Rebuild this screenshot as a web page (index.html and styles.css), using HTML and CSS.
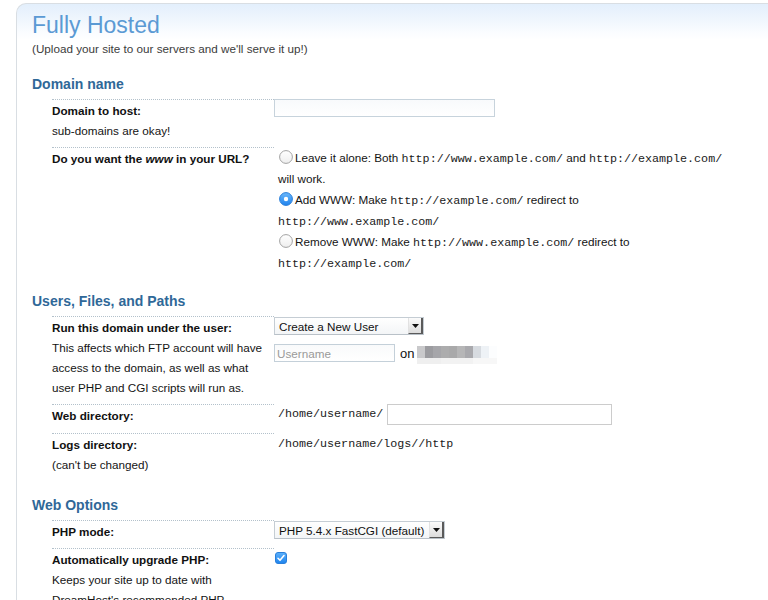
FILE: index.html
```html
<!DOCTYPE html>
<html lang="en">
<head>
<meta charset="utf-8">
<title>Fully Hosted</title>
<link rel="stylesheet" href="styles.css">
</head>
<body>
<div class="panel">
  <h1 class="title">Fully Hosted</h1>
  <p class="subtitle">(Upload your site to our servers and we'll serve it up!)</p>

  <h2 class="section section-first">Domain name</h2>
  <div class="row">
    <div class="label">
      <div class="label-title">Domain to host:</div>
      <div>sub-domains are okay!</div>
    </div>
    <div class="value">
      <input class="text text-domain" type="text">
    </div>
  </div>
  <div class="row">
    <div class="label">
      <div class="label-title">Do you want the <em>www</em> in your URL?</div>
    </div>
    <div class="value options">
      <div class="opt"><span class="radio"><svg width="14" height="14" viewBox="0 0 14 14"><defs><linearGradient id="ru" x1="0" y1="0" x2="0" y2="1"><stop offset="0" stop-color="#ffffff"/><stop offset="1" stop-color="#eeeeee"/></linearGradient></defs><circle cx="7" cy="7" r="6.4" fill="url(#ru)" stroke="#a2a2a2" stroke-width="1"/></svg></span>Leave it alone: Both <code>http://www.example.com/</code> and <code>http://example.com/</code> will work.</div>
      <div class="opt"><span class="radio"><svg width="14" height="14" viewBox="0 0 14 14"><defs><linearGradient id="rc" x1="0" y1="0" x2="0" y2="1"><stop offset="0" stop-color="#6cb8fb"/><stop offset="1" stop-color="#1f83ee"/></linearGradient></defs><circle cx="7" cy="7" r="6.4" fill="url(#rc)" stroke="#2b7fd9" stroke-width="1"/><circle cx="7" cy="7" r="2.2" fill="#ffffff"/></svg></span>Add WWW: Make <code>http://example.com/</code> redirect to <code>http://www.example.com/</code></div>
      <div class="opt"><span class="radio"><svg width="14" height="14" viewBox="0 0 14 14"><circle cx="7" cy="7" r="6.4" fill="url(#ru)" stroke="#a2a2a2" stroke-width="1"/></svg></span>Remove WWW: Make <code>http://www.example.com/</code> redirect to <code>http://example.com/</code></div>
    </div>
  </div>

  <h2 class="section">Users, Files, and Paths</h2>
  <div class="row">
    <div class="label">
      <div class="label-title">Run this domain under the user:</div>
      <div>This affects which FTP account will have access to the domain, as well as what user PHP and CGI scripts will run as.</div>
    </div>
    <div class="value stack">
      <div class="select select-user"><span class="select-text">Create a New User</span><span class="select-btn"><svg width="7" height="4" viewBox="0 0 7 4"><path d="M0 0H7L3.5 4Z" fill="#111"/></svg></span></div>
      <div class="user-line">
        <input class="text text-user" type="text" placeholder="Username">
        <span class="on">on</span>
        <span class="blur"></span>
      </div>
    </div>
  </div>
  <div class="row">
    <div class="label">
      <div class="label-title">Web directory:</div>
    </div>
    <div class="value dir-line">
      <code>/home/username/</code>
      <input class="text text-dir" type="text">
    </div>
  </div>
  <div class="row">
    <div class="label">
      <div class="label-title">Logs directory:</div>
      <div>(can't be changed)</div>
    </div>
    <div class="value plain">
      <code>/home/username/logs//http</code>
    </div>
  </div>

  <h2 class="section section-wide">Web Options</h2>
  <div class="row">
    <div class="label">
      <div class="label-title">PHP mode:</div>
    </div>
    <div class="value stack">
      <div class="select select-php"><span class="select-text">PHP 5.4.x FastCGI (default)</span><span class="select-btn"><svg width="7" height="4" viewBox="0 0 7 4"><path d="M0 0H7L3.5 4Z" fill="#111"/></svg></span></div>
    </div>
  </div>
  <div class="row">
    <div class="label">
      <div class="label-title">Automatically upgrade PHP:</div>
      <div>Keeps your site up to date with DreamHost's recommended PHP<br>version.</div>
    </div>
    <div class="value">
      <span class="checkbox"><svg width="12" height="12" viewBox="0 0 12 12"><defs><linearGradient id="cb" x1="0" y1="0" x2="0" y2="1"><stop offset="0" stop-color="#5db1fb"/><stop offset="1" stop-color="#1e84ee"/></linearGradient></defs><rect x="0.5" y="0.5" width="11" height="11" rx="2.5" fill="url(#cb)" stroke="#2a7fda"/><path d="M3 6.3L5 8.3L9 3.6" fill="none" stroke="#fff" stroke-width="1.6" stroke-linecap="round" stroke-linejoin="round"/></svg></span>
    </div>
  </div>
</div>
</body>
</html>
```

FILE: styles.css
```css
html {
  overflow: hidden;
}

body {
  margin: 0;
  background: #ffffff;
  font-family: "Liberation Sans", Arial, Helvetica, sans-serif;
  font-size: 11.7px;
  color: #141414;
}

.panel {
  margin: 3px 0 0 16px;
  padding: 7px 0 60px 15px;
  border-top: 1px solid #d9dee3;
  border-left: 1px solid #d9dee3;
  border-top-left-radius: 10px;
  background: linear-gradient(#e3effc 0, #eef5fd 14px, #fafcff 28px, #ffffff 36px);
}

.title {
  margin: 0;
  font-size: 23px;
  line-height: 28px;
  font-weight: normal;
  color: #5b9ad4;
}

.subtitle {
  margin: 0;
  line-height: 20px;
  color: #3c3c3c;
}

.section {
  margin: 12px 0 5px;
  font-size: 14px;
  line-height: 20px;
  font-weight: bold;
  color: #2f6898;
}

.section-first {
  margin-top: 15px;
}

.section-wide {
  margin-top: 14px;
}

.row {
  display: grid;
  grid-template-columns: 222px 456px;
  margin-left: 20px;
}

.label {
  border-top: 1px dotted #b3c1cb;
  padding: 1px 0 6px;
  line-height: 20px;
}

.label-title {
  font-weight: bold;
  color: #111111;
}

.value {
  padding-bottom: 6px;
}

code {
  font-family: "Liberation Mono", "Courier New", monospace;
  font-size: 11.7px;
  line-height: 1;
  color: #1a1a1a;
}

.text {
  box-sizing: border-box;
  margin: 0;
  padding: 0 2px;
  font-family: "Liberation Sans", Arial, sans-serif;
  font-size: 11.7px;
  background: #ffffff;
  outline: none;
}

.text-domain {
  display: block;
  width: 221px;
  height: 18px;
  border: 1px solid #c7d3dc;
  background: linear-gradient(#f8fafc, #ffffff);
}

.options {
  padding-left: 4px;
  line-height: 21px;
}

.radio {
  display: inline-block;
  width: 14px;
  height: 14px;
  margin: 0 2px 0 1px;
  vertical-align: -2px;
}

.radio svg {
  display: block;
}

.stack {
  display: flex;
  flex-direction: column;
  align-items: flex-start;
  gap: 7px;
  padding-top: 1px;
}

.select {
  box-sizing: border-box;
  display: flex;
  align-items: stretch;
  height: 18px;
  border: 1px solid #c5cdd4;
  border-bottom-color: #b9c1c8;
  background: linear-gradient(#ffffff, #f3f5f7);
  line-height: 17px;
}

.select-user {
  width: 150px;
}

.select-php {
  width: 171px;
}

.select-text {
  padding-left: 4px;
  white-space: nowrap;
  color: #111111;
}

.select-btn {
  margin-left: auto;
  width: 12px;
  display: flex;
  align-items: center;
  justify-content: center;
  background: linear-gradient(#fbfbfb, #dcdcdc);
  border-left: 1px solid #e2e2e2;
  border-right: 2px solid #5a5a5a;
  border-bottom: 1px solid #5a5a5a;
}

.user-line {
  display: flex;
  align-items: center;
}

.text-user {
  width: 121px;
  height: 18px;
  border: 1px solid #c4d0d9;
  background: linear-gradient(#f9fafb, #ffffff);
}

.text-user::placeholder {
  color: #9a9a9a;
}

.on {
  margin-left: 5px;
  font-size: 13px;
  color: #111111;
}

.blur {
  display: block;
  width: 80px;
  height: 18px;
  margin: 4px 0 0 3px;
  background-image:
    linear-gradient(to right, #c9c9cb 0 8px, #9c9ca0 8px 16px, #a6a6aa 16px 24px, #acacad 24px 32px, #a9a9aa 32px 40px, #b6b6b7 40px 48px, #a9a9ad 48px 56px, #d7dbe0 56px 64px, #eef2f6 64px 72px, #fcfdfe 72px 80px),
    linear-gradient(to right, #efefef 0 24px, #f2f2f2 24px 56px, #f7f7f7 56px 80px);
  background-size: 80px 12px, 80px 6px;
  background-position: 0 0, 0 12px;
  background-repeat: no-repeat;
}

.dir-line {
  display: flex;
  align-items: center;
  gap: 4px;
  height: 21px;
  padding: 0 0 8px 4px;
}

.text-dir {
  width: 225px;
  height: 21px;
  border: 1px solid #cccccc;
}

.plain {
  padding-left: 4px;
  line-height: 20px;
}

.checkbox {
  display: block;
  width: 12px;
  height: 12px;
  margin: 4px 0 0 1px;
}

.checkbox svg {
  display: block;
}
```
